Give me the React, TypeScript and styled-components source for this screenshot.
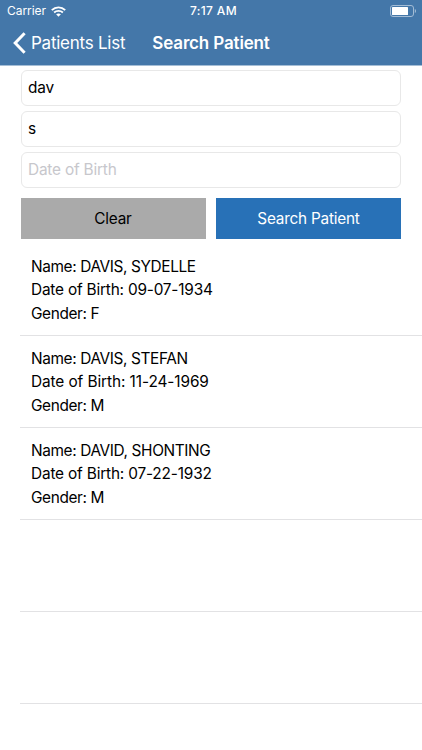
import React from "react";
import styled, { createGlobalStyle } from "styled-components";

const GlobalStyle = createGlobalStyle`
  *, *::before, *::after { box-sizing: border-box; }
  html, body { margin: 0; background: #fff; overflow: hidden; }
  body, input, button { font-family: Inter, "Liberation Sans", sans-serif; }
`;

const Screen = styled.div`
  display: flex;
  flex-direction: column;
  width: 422px;
  height: 750px;
  overflow: hidden;
  background: #fff;
  color: #000;
`;

const Header = styled.header`
  flex: none;
  height: 66px;
  background: #4477a9;
  border-bottom: 1px solid #a5bed6;
  color: #fff;
`;

const StatusBar = styled.div`
  display: grid;
  grid-template-columns: 1fr auto 1fr;
  align-items: center;
  height: 22px;
  padding: 0 6px 0 7px;
  font-size: 12px;
  line-height: 22px;
`;

const Carrier = styled.div`
  display: flex;
  align-items: center;
  gap: 5px;
  letter-spacing: -0.05px;
`;

const Clock = styled.div`
  padding-left: 4px;
  font-weight: 500;
  letter-spacing: 0.35px;
`;

const Battery = styled.div`
  justify-self: end;
  display: flex;
`;

const NavBar = styled.nav`
  display: grid;
  grid-template-columns: 1fr auto 1fr;
  align-items: center;
  height: 42px;
  padding-left: 13px;
`;

const BackButton = styled.button`
  display: flex;
  align-items: center;
  gap: 5px;
  padding: 0;
  border: 0;
  background: none;
  color: #fff;
  font-size: 17px;
  line-height: 22px;
  letter-spacing: -0.25px;
  white-space: nowrap;
`;

const Title = styled.h1`
  margin: 0 13px 0 0;
  font-size: 17px;
  font-weight: 600;
  line-height: 22px;
  letter-spacing: -0.15px;
`;

const SearchForm = styled.form`
  display: grid;
  grid-template-columns: 185px 185px;
  column-gap: 10.5px;
  row-gap: 5px;
  padding: 4px 0 0 20.5px;
`;

const Field = styled.input`
  grid-column: 1 / -1;
  height: 36px;
  padding: 0 7px 1px 6.5px;
  border: 1px solid #e8e8e8;
  border-radius: 6px;
  background: #fff;
  color: #000;
  font-size: 15.4px;
  letter-spacing: -0.2px;
  outline: none;
  &::placeholder { color: #c7c7cc; opacity: 1; }
`;

const ActionButton = styled.button<{ $primary?: boolean }>`
  height: 41px;
  margin-top: 5px;
  padding: 0;
  border: 0;
  background: ${(p) => (p.$primary ? "#2871b7" : "#aaaaaa")};
  color: ${(p) => (p.$primary ? "#fff" : "#000")};
  font-size: 15.3px;
  letter-spacing: -0.2px;
`;

const Results = styled.ul`
  margin: 5px 0 0 20px;
  padding: 0;
  list-style: none;
`;

const ResultRow = styled.li`
  height: 92px;
  padding: 11px 0 0 11px;
  border-bottom: 1px solid #e2e2e4;
`;

const Detail = styled.p<{ $tracking?: number }>`
  width: max-content;
  margin: 0;
  font-size: 15.4px;
  line-height: 23.3px;
  letter-spacing: ${(p) => p.$tracking ?? -0.38}px;
  white-space: nowrap;
`;

const patients = [
  { name: "DAVIS, SYDELLE", birth: "09-07-1934", gender: "F", birthTracking: -0.2 },
  { name: "DAVIS, STEFAN", birth: "11-24-1969", gender: "M", birthTracking: -0.09 },
  { name: "DAVID, SHONTING", birth: "07-22-1932", gender: "M", birthTracking: -0.18 },
];

const WifiIcon = () => (
  <svg width="15" height="11" viewBox="0 0 15 11" fill="none" stroke="#fff">
    <path d="M0.8 4.1C4.6 0.4 10.4 0.4 14.2 4.1" strokeWidth="1.9" />
    <path d="M3.1 6.5C5.6 4.2 9.4 4.2 11.9 6.5" strokeWidth="1.8" />
    <path d="M7.5 10.7L5.1 8.3C6.5 7.1 8.5 7.1 9.9 8.3Z" fill="#fff" stroke="none" />
  </svg>
);

const BatteryIcon = () => (
  <svg width="26" height="12" viewBox="0 0 26 12">
    <rect x="0.5" y="0.5" width="23" height="11" rx="2.5" fill="none" stroke="#a3bcd5" />
    <rect x="2" y="2" width="16" height="8" rx="0.6" fill="#fff" />
    <path d="M24.8 4V8C26.4 7.3 26.4 4.7 24.8 4Z" fill="#a3bcd5" />
  </svg>
);

const ChevronIcon = () => (
  <svg width="13" height="22" viewBox="0 0 13 22" fill="none" stroke="#fff" strokeWidth="3">
    <path d="M11.6 1.3L2.2 11L11.6 20.7" />
  </svg>
);

export default function App() {
  return (
    <Screen>
      <GlobalStyle />
      <Header>
        <StatusBar>
          <Carrier>
            Carrier
            <WifiIcon />
          </Carrier>
          <Clock>7:17 AM</Clock>
          <Battery>
            <BatteryIcon />
          </Battery>
        </StatusBar>
        <NavBar>
          <BackButton type="button">
            <ChevronIcon />
            Patients List
          </BackButton>
          <Title>Search Patient</Title>
        </NavBar>
      </Header>
      <SearchForm onSubmit={(e) => e.preventDefault()}>
        <Field defaultValue="dav" aria-label="Last name" />
        <Field defaultValue="s" aria-label="First name" />
        <Field placeholder="Date of Birth" />
        <ActionButton type="reset">Clear</ActionButton>
        <ActionButton type="submit" $primary>Search Patient</ActionButton>
      </SearchForm>
      <Results>
        {patients.map((p) => (
          <ResultRow key={p.name}>
            <Detail>Name: {p.name}</Detail>
            <Detail $tracking={p.birthTracking}>Date of Birth: {p.birth}</Detail>
            <Detail>Gender: {p.gender}</Detail>
          </ResultRow>
        ))}
        <ResultRow />
        <ResultRow />
      </Results>
    </Screen>
  );
}
